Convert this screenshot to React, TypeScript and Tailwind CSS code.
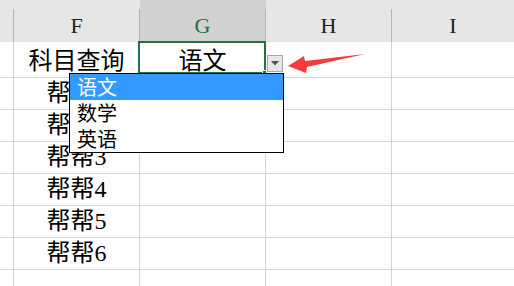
import React from "react";

const cellFont = { fontFamily: "'Liberation Serif', 'Noto Sans CJK SC', serif" };
const listFont = { fontFamily: "'Noto Sans CJK SC', 'Noto Sans', sans-serif" };

const headers = ["", "F", "G", "H", "I"];
const rows: string[][] = [
  ["", "科目查询", "语文", "", ""],
  ["", "帮帮1", "", "", ""],
  ["", "帮帮2", "", "", ""],
  ["", "帮帮3", "", "", ""],
  ["", "帮帮4", "", "", ""],
  ["", "帮帮5", "", "", ""],
  ["", "帮帮6", "", "", ""],
  ["", "", "", "", ""],
];

export default function App() {
  return (
    <div className="relative w-[514px] h-[286px] overflow-hidden bg-white">
      {/* Column header */}
      <div className="grid grid-cols-[14px_126px_126px_126px_1fr] h-[42px] border-b border-[#ababab]">
        {headers.map((h, i) => (
          <div
            key={i}
            className={
              "flex flex-col " + (h === "G" ? "bg-[#d2d2d2]" : "bg-[#e6e6e6]")
            }
          >
            <div className="h-[9px]" />
            <div
              className={
                "flex-1 flex items-center justify-center text-[22px] " +
                (i < 4 ? "border-r border-[#b4b4b4] " : "") +
                (h === "G" ? "text-[#217346]" : "text-[#222]")
              }
              style={cellFont}
            >
              {h}
            </div>
          </div>
        ))}
      </div>

      {/* Body rows */}
      {rows.map((r, ri) => (
        <div
          key={ri}
          className="grid grid-cols-[14px_126px_126px_126px_1fr] h-[32px]"
        >
          {r.map((c, ci) => (
            <div
              key={ci}
              className={
                "flex items-center justify-center border-b border-[#d4d4d4] text-[24px] leading-[32px] pt-[3px] text-black " +
                (ci < 4 ? "border-r" : "")
              }
              style={cellFont}
            >
              {c}
            </div>
          ))}
        </div>
      ))}

      {/* Selected cell border */}
      <div className="absolute left-[138px] top-[41px] w-[128px] h-[33px] border-2 border-[#217346]" />
      <div className="absolute left-[262px] top-[70px] w-[5px] h-[5px] bg-[#217346] border border-white" />

      {/* Dropdown button */}
      <div className="absolute left-[267px] top-[55px] w-[16px] h-[17px] bg-[#e4e6ea] border border-[#a6a6a6] flex items-center justify-center">
        <svg width="8" height="5" viewBox="0 0 8 5">
          <polygon points="0,0 8,0 4,4.5" fill="#505050" />
        </svg>
      </div>

      {/* Dropdown list */}
      <div
        className="absolute left-[69px] top-[73px] w-[215px] h-[80px] bg-white border border-black flex flex-col"
        style={listFont}
      >
        <div className="h-[26px] bg-[#3399ff] text-white text-[20px] leading-[26px] pl-[7px]">
          语文
        </div>
        <div className="h-[26px] text-black text-[20px] leading-[26px] pl-[7px]">
          数学
        </div>
        <div className="h-[26px] text-black text-[20px] leading-[26px] pl-[7px]">
          英语
        </div>
      </div>

      {/* Red arrow */}
      <svg
        className="absolute left-0 top-0 pointer-events-none"
        width="514"
        height="286"
        viewBox="0 0 514 286"
      >
        <polygon
          points="288,66 304,56 305,61 365,54 307,67 306,73"
          fill="#f53c3c"
        />
      </svg>
    </div>
  );
}
